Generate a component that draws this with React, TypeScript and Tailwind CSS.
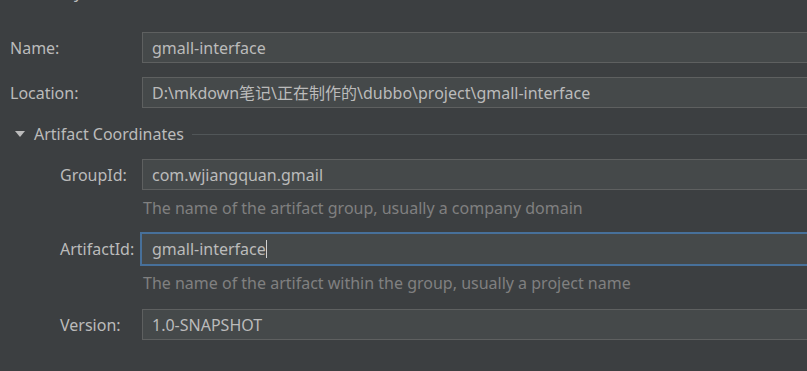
import React from 'react';

const font = { fontFamily: '"Noto Sans", "Noto Sans CJK SC", sans-serif' };

function Field({ value, focused }: { value: string; focused?: boolean }) {
  if (focused) {
    return (
      <div className="flex-1 -ml-[2px] h-[34px] border-2 border-[#47709a] bg-[#45494a] flex items-center pl-[10px] -mr-[40px]">
        <span className="text-[#bbbbbb] whitespace-nowrap">{value}</span>
        <span className="w-px h-[18px] bg-[#d0d0d0]" />
      </div>
    );
  }
  return (
    <div className="flex-1 h-[31px] border border-[#5e6060] bg-[#45494a] flex items-center pl-[9px] -mr-[40px]">
      <span className="text-[#bbbbbb] whitespace-nowrap">{value}</span>
    </div>
  );
}

function Row({
  label,
  value,
  indent,
  focused,
}: {
  label: string;
  value: string;
  indent?: boolean;
  focused?: boolean;
}) {
  return (
    <div className={`flex items-center ${focused ? 'h-[34px]' : 'h-[31px]'}`}>
      <div className={`${indent ? 'pl-[60px]' : 'pl-[10px]'} w-[142px] shrink-0 text-[#bbbbbb]`}>
        {label}
      </div>
      <Field value={value} focused={focused} />
    </div>
  );
}

function Hint({ children }: { children: React.ReactNode }) {
  return <div className="pl-[143px] h-[20px] flex items-center text-[#808080]">{children}</div>;
}

export default function App() {
  return (
    <div
      className="w-[807px] h-[371px] overflow-hidden bg-[#3c3f41] text-[16px] leading-none"
      style={font}
    >
      <div className="h-[3px] overflow-hidden pl-[74px] relative">
        <span className="block -mt-[16px] text-[#bbbbbb]">y</span>
      </div>
      <div className="pt-[29px] flex flex-col">
        <Row label="Name:" value="gmall-interface" />
        <div className="h-[14px]" />
        <Row label="Location:" value="D:\mkdown笔记\正在制作的\dubbo\project\gmall-interface" />
        <div className="h-[16px]" />
        <div className="flex items-center h-[20px]">
          <svg className="ml-[15px] w-[10px] h-[6px]" viewBox="0 0 10 6">
            <path d="M0 0 L10 0 L5 6 Z" fill="#bbbbbb" />
          </svg>
          <span className="ml-[9px] text-[#bbbbbb]">Artifact Coordinates</span>
          <div className="ml-[8px] flex-1 h-px bg-[#515658]" />
        </div>
        <div className="h-[15px]" />
        <Row label="GroupId:" value="com.wjiangquan.gmail" indent />
        <div className="h-[8px]" />
        <Hint>The name of the artifact group, usually a company domain</Hint>
        <div className="h-[14px]" />
        <Row label="ArtifactId:" value="gmall-interface" indent focused />
        <div className="h-[7px]" />
        <Hint>The name of the artifact within the group, usually a project name</Hint>
        <div className="h-[16px]" />
        <Row label="Version:" value="1.0-SNAPSHOT" indent />
      </div>
    </div>
  );
}
